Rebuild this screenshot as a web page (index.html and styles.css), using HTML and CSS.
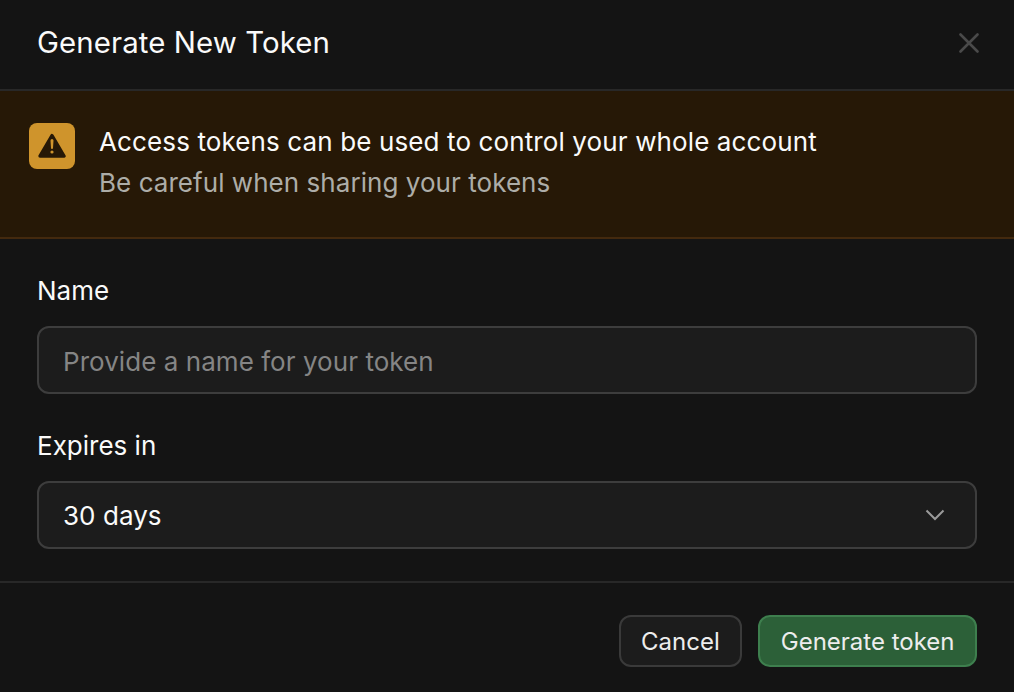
FILE: index.html
```html
<!DOCTYPE html>
<html lang="en">
<head>
<meta charset="UTF-8">
<title>Generate New Token</title>
<link rel="stylesheet" href="styles.css">
</head>
<body>
<div class="dialog">
  <header class="header">
    <h1 class="title">Generate New Token</h1>
    <button class="close" aria-label="Close">
      <svg width="20" height="20" viewBox="0 0 20 20" fill="none" stroke="#4a4a4a" stroke-width="2.6" stroke-linecap="round"><path d="M1.5 1.5l17 17M18.5 1.5l-17 17"/></svg>
    </button>
  </header>

  <div class="warning">
    <div class="warning-icon">
      <svg width="28" height="26" viewBox="0 0 28 26"><path fill="#261806" stroke="#261806" stroke-width="3.4" stroke-linejoin="round" d="M14 2.6L26 23H2z"/><path fill="#cf942c" d="M12.5 7.4a1.5 1.5 0 0 1 3 0l-.5 7.6a1 1 0 0 1-2 0z"/><circle cx="14" cy="19" r="1.6" fill="#cf942c"/></svg>
    </div>
    <div class="warning-text">
      <div class="warning-title">Access tokens can be used to control your whole account</div>
      <div class="warning-sub">Be careful when sharing your tokens</div>
    </div>
  </div>

  <div class="form">
    <label class="label">Name</label>
    <input class="field name-field" placeholder="Provide a name for your token">
    <label class="label">Expires in</label>
    <div class="field select">
      <span>30 days</span>
      <svg width="20" height="12" viewBox="0 0 20 12" fill="none" stroke="#9a9a9a" stroke-width="2"><path d="M1.5 1.5L10 10l8.5-8.5"/></svg>
    </div>
  </div>

  <footer class="footer">
    <button class="btn">Cancel</button>
    <button class="btn primary">Generate token</button>
  </footer>
</div>
</body>
</html>
```

FILE: styles.css
```css
* { box-sizing: border-box; }
html, body { margin: 0; height: 100%; }
body { background: #141414; color: #fafafa; font-family: Inter, "Liberation Sans", sans-serif; overflow: hidden; }
.dialog { width: 1014px; height: 692px; display: flex; flex-direction: column; }

.header { height: 91px; display: flex; align-items: center; justify-content: space-between; padding: 0 35px 3px 37px; border-bottom: 2px solid #282828; }
.title { margin: 0; font-size: 29.4px; line-height: 40px; font-weight: 430; letter-spacing: 0.1px; color: #fafafa; }
.close { background: none; border: 0; padding: 0; display: flex; }

.warning { height: 148px; display: flex; gap: 24px; padding: 32px 29px 0; background: #261806; border-bottom: 2px solid #43290e; }
.warning-icon { width: 46px; height: 46px; border-radius: 8px; background: #cf942c; display: flex; align-items: center; justify-content: center; }
.warning-text { margin-top: -1px; }
.warning-title { font-size: 26px; line-height: 39px; font-weight: 440; letter-spacing: 0.12px; color: #fafafa; }
.warning-sub { font-size: 26px; line-height: 40px; letter-spacing: 0.05px; color: #adada8; margin-top: 2px; }

.form { height: 344px; padding: 32px 37px 0; border-bottom: 2px solid #282828; }
.label { display: block; font-size: 26px; line-height: 40px; font-weight: 400; color: #fafafa; margin-bottom: 15px; }
.field { display: block; width: 100%; height: 68px; padding: 2px 24px 0; background: #1c1c1c; border: 2px solid #3d3d3d; border-radius: 12px; font: 400 26px Inter, "Liberation Sans", sans-serif; letter-spacing: 0.05px; color: #fafafa; outline: none; }
.field::placeholder { color: #858585; opacity: 1; }
.name-field { margin-bottom: 32px; }
.select { display: flex; align-items: center; justify-content: space-between; padding: 0 30px 0 24px; }

.footer { flex: 1; display: flex; justify-content: flex-end; align-items: flex-start; gap: 16px; padding: 32px 37px 0; }
.btn { height: 52px; padding: 0 20.5px; background: #1c1c1c; border: 2px solid #3a3a3a; border-radius: 12px; font: 400 24px Inter, "Liberation Sans", sans-serif; color: #ededed; }
.primary { background: #2c6038; border-color: #3e7f4e; }
```
